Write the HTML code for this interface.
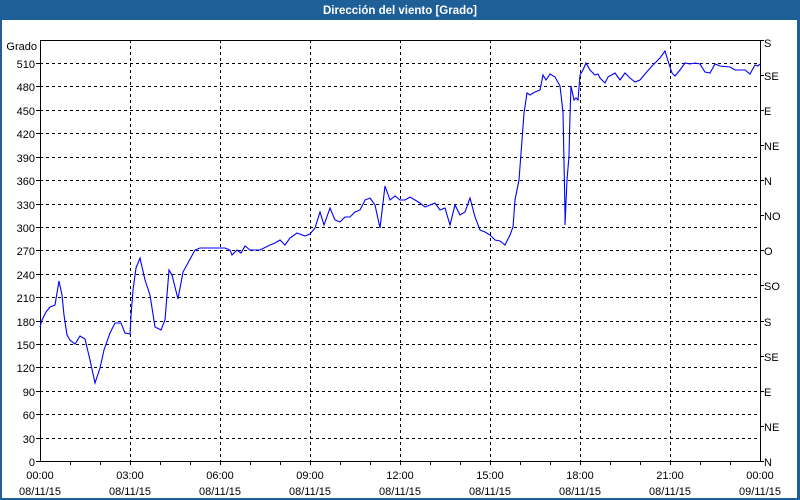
<!DOCTYPE html>
<html><head><meta charset="utf-8"><style>
html,body{margin:0;padding:0;background:#fff}
body{width:800px;height:500px;overflow:hidden;position:relative;font-family:"Liberation Sans",sans-serif}
</style></head><body>
<svg width="800" height="500" viewBox="0 0 800 500" xmlns="http://www.w3.org/2000/svg" style="position:absolute;left:0;top:0;font-family:'Liberation Sans',sans-serif;font-size:11px">
<rect x="0" y="0" width="800" height="500" fill="#1f5f97"/>
<rect x="2" y="20" width="795" height="478" fill="#fff"/>
<text x="400" y="14" fill="#fff" font-weight="bold" text-anchor="middle" font-size="11.5">Dirección del viento [Grado]</text>
<g stroke="#000" stroke-width="1" stroke-dasharray="3,3" shape-rendering="crispEdges">
<line x1="40" y1="63.5" x2="760" y2="63.5"/><line x1="40" y1="86.5" x2="760" y2="86.5"/>
<line x1="40" y1="110.5" x2="760" y2="110.5"/><line x1="40" y1="133.5" x2="760" y2="133.5"/>
<line x1="40" y1="157.5" x2="760" y2="157.5"/><line x1="40" y1="180.5" x2="760" y2="180.5"/>
<line x1="40" y1="204.5" x2="760" y2="204.5"/><line x1="40" y1="227.5" x2="760" y2="227.5"/>
<line x1="40" y1="250.5" x2="760" y2="250.5"/><line x1="40" y1="274.5" x2="760" y2="274.5"/>
<line x1="40" y1="297.5" x2="760" y2="297.5"/><line x1="40" y1="321.5" x2="760" y2="321.5"/>
<line x1="40" y1="344.5" x2="760" y2="344.5"/><line x1="40" y1="367.5" x2="760" y2="367.5"/>
<line x1="40" y1="391.5" x2="760" y2="391.5"/><line x1="40" y1="414.5" x2="760" y2="414.5"/>
<line x1="40" y1="438.5" x2="760" y2="438.5"/>
<line x1="130.5" y1="40" x2="130.5" y2="461"/><line x1="220.5" y1="40" x2="220.5" y2="461"/>
<line x1="310.5" y1="40" x2="310.5" y2="461"/><line x1="400.5" y1="40" x2="400.5" y2="461"/>
<line x1="490.5" y1="40" x2="490.5" y2="461"/><line x1="580.5" y1="40" x2="580.5" y2="461"/>
<line x1="670.5" y1="40" x2="670.5" y2="461"/>
</g>
<g stroke="#000" stroke-width="1" fill="none" shape-rendering="crispEdges">
<path d="M40.5 40.5H760.5V461.5H40.5Z"/>
<path d="M70.5 461v4M100.5 461v4M130.5 461v4M160.5 461v4M190.5 461v4M220.5 461v4M250.5 461v4M280.5 461v4M310.5 461v4M340.5 461v4M370.5 461v4M400.5 461v4M430.5 461v4M460.5 461v4M490.5 461v4M520.5 461v4M550.5 461v4M580.5 461v4M610.5 461v4M640.5 461v4M670.5 461v4M700.5 461v4M730.5 461v4"/>
<path d="M36 63.5h4M36 86.5h4M36 110.5h4M36 133.5h4M36 157.5h4M36 180.5h4M36 204.5h4M36 227.5h4M36 250.5h4M36 274.5h4M36 297.5h4M36 321.5h4M36 344.5h4M36 367.5h4M36 391.5h4M36 414.5h4M36 438.5h4M36 461.5h4"/>
<path d="M760 40.5h4M760 75.5h4M760 110.5h4M760 145.5h4M760 180.5h4M760 215.5h4M760 250.5h4M760 285.5h4M760 321.5h4M760 356.5h4M760 391.5h4M760 426.5h4M760 461.5h4"/>
</g>
<g fill="#000" text-anchor="end">
<text x="37" y="50">Grado</text>
<text x="35" y="68">510</text><text x="35" y="91">480</text><text x="35" y="115">450</text><text x="35" y="138">420</text>
<text x="35" y="162">390</text><text x="35" y="185">360</text><text x="35" y="209">330</text><text x="35" y="232">300</text>
<text x="35" y="255">270</text><text x="35" y="279">240</text><text x="35" y="302">210</text><text x="35" y="326">180</text>
<text x="35" y="349">150</text><text x="35" y="372">120</text><text x="35" y="396">90</text><text x="35" y="419">60</text>
<text x="35" y="443">30</text><text x="35" y="466">0</text>
</g>
<g fill="#000">
<text x="764" y="47">S</text><text x="764" y="80">SE</text><text x="764" y="115">E</text><text x="764" y="150">NE</text>
<text x="764" y="185">N</text><text x="764" y="220">NO</text><text x="764" y="255">O</text><text x="764" y="290">SO</text>
<text x="764" y="326">S</text><text x="764" y="361">SE</text><text x="764" y="396">E</text><text x="764" y="431">NE</text>
<text x="764" y="466">N</text>
</g>
<g fill="#000" text-anchor="middle">
<text x="40" y="479">00:00</text><text x="40" y="495">08/11/15</text>
<text x="130" y="479">03:00</text><text x="130" y="495">08/11/15</text>
<text x="220" y="479">06:00</text><text x="220" y="495">08/11/15</text>
<text x="310" y="479">09:00</text><text x="310" y="495">08/11/15</text>
<text x="400" y="479">12:00</text><text x="400" y="495">08/11/15</text>
<text x="490" y="479">15:00</text><text x="490" y="495">08/11/15</text>
<text x="580" y="479">18:00</text><text x="580" y="495">08/11/15</text>
<text x="670" y="479">21:00</text><text x="670" y="495">08/11/15</text>
<text x="760" y="479">00:00</text><text x="760" y="495">09/11/15</text>
</g>
<polyline fill="none" stroke="#0000ff" stroke-width="1.1" points="40,327 42,320 46,312 50,307 55,305 59,281 62,295 64,315 67,335 70,340 75,344 80,336 85,339 90,360 95,383 100,368 104,350 110,333 115,323 121,323 125,333 130,334 131,316 133,290 136,268 140,258 145,280 150,295 155,327 161,330 165,320 169,270 172,275 178,299 183,272 195,250 200,248 218,248 225,248 230,250 232,255 237,250 241,253 245,246 250,250 260,250 270,245 275,243 280,240 285,245 290,238 297,233 305,236 310,234 315,228 320,212 324,225 330,208 335,220 340,222 345,217 350,217 355,212 360,210 365,200 370,198 375,205 380,228 385,186 390,200 395,196 400,200 405,200 410,197 415,200 420,203 425,207 430,205 435,203 440,210 445,208 450,225 455,205 460,215 465,212 470,198 475,217 480,230 485,232 490,235 495,240 500,241 505,245 510,235 513,227 515,200 519,180 522,140 524,113 527,93 530,95 535,92 540,90 543,75 546,80 550,74 555,77 560,86 563,112 565,212 565,225 567,180 569,156 570,115 571,86 574,100 576,98 578,100 580,75 583,70 586,63 590,70 595,75 598,74 600,78 605,83 608,77 615,73 620,80 625,73 630,78 635,82 640,80 645,74 652,66 660,58 665,51 668,61 672,73 675,76 680,70 685,63 690,64 695,63 700,64 705,72 710,73 715,64 720,66 730,67 735,70 745,70 750,74 755,65 758,66 760,64"/>
</svg>
</body></html>
